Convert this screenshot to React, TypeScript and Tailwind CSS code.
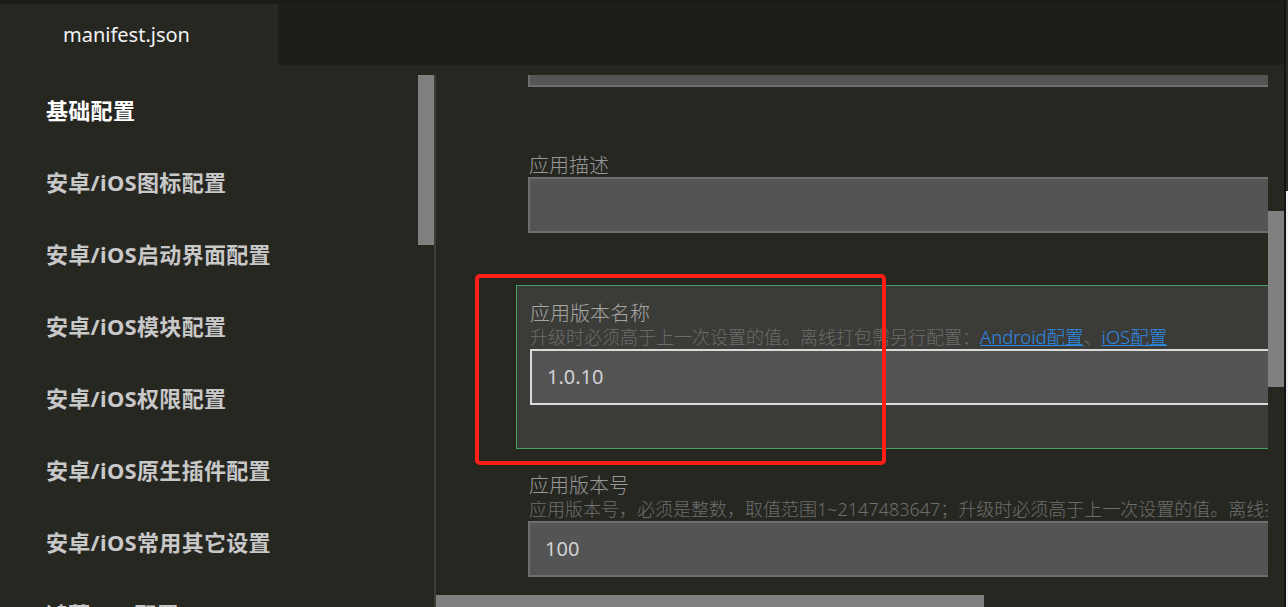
import React from "react";

const FONT = { fontFamily: '"Noto Sans", "Noto Sans CJK SC", sans-serif' };

const items = [
  "基础配置",
  "安卓/iOS图标配置",
  "安卓/iOS启动界面配置",
  "安卓/iOS模块配置",
  "安卓/iOS权限配置",
  "安卓/iOS原生插件配置",
  "安卓/iOS常用其它设置",
  "鸿蒙App配置",
];

export default function App() {
  return (
    <div className="flex h-[607px] w-[1288px] overflow-hidden bg-[#272722]" style={FONT}>
      <div className="flex w-[1284px] shrink-0 flex-col">
        {/* top strip */}
        <div className="h-[3px] shrink-0 bg-[#1a1b18]" />
        {/* tab bar */}
        <div className="flex h-[62px] shrink-0">
          <div className="flex w-[278px] shrink-0 items-center border-t border-[#1e1f1c] bg-[#272722] pl-[63px] text-[20px] text-[#f2f2f2]">
            manifest.json
          </div>
          <div className="flex-1 bg-[#1d1e1a]" />
        </div>
        {/* body */}
        <div className="flex min-h-0 flex-1">
          {/* sidebar */}
          <div className="w-[418px] shrink-0 pt-[9px]">
            {items.map((t, i) => (
              <div
                key={t}
                className={`flex h-[72px] items-center whitespace-nowrap pl-[46px] text-[22px] font-bold tracking-[0.3px] ${
                  i === 0 ? "text-white" : "text-[#c8c8c8]"
                }`}
              >
                {t}
              </div>
            ))}
          </div>
          {/* sidebar scrollbar */}
          <div className="w-[16px] shrink-0 pt-[10px]">
            <div className="h-[170px] bg-[#808080]" />
          </div>
          <div className="mt-[10px] w-[2px] shrink-0 bg-[#3c3c38]" />
          {/* main */}
          <div className="flex min-w-0 flex-1 flex-col pt-[10px]">
            <div className="flex h-[520px] shrink-0">
              <div className="relative min-w-0 flex-1 overflow-hidden">
                {/* top (cut) input */}
                <div className="ml-[92px] h-[12px] w-[800px] border-x-2 border-b-2 border-[#6e6e6e] bg-[#545454]" />

                {/* 应用描述 */}
                <div className="ml-[92px] mt-[67px]">
                  <div className="h-[23px] pl-px text-[20px] font-light leading-[23px] text-[#979797]">应用描述</div>
                  <div className="h-[56px] w-[800px] border-2 border-[#6e6e6e] bg-[#545454]" />
                </div>

                {/* 应用版本名称 (focused) */}
                <div className="ml-[80px] mt-[52px] w-[900px] border border-[#3fa35f] bg-[#3b3b37] pb-[43px] pl-[13px] pt-[16px]">
                  <div className="h-[23px] text-[20px] font-light leading-[23px] text-[#a6a6a6]">应用版本名称</div>
                  <div className="h-[24px] whitespace-nowrap text-[18px] font-light leading-[24px] text-[#6c6c6a]">
                    升级时必须高于上一次设置的值。离线打包需另行配置：
                    <span className="text-[18.5px] text-[#2b8ae6] underline">Android配置</span>
                    <span>、</span>
                    <span className="text-[18.5px] text-[#2b8ae6] underline">iOS配置</span>
                  </div>
                  <div className="flex h-[56px] w-[860px] items-center border-2 border-[#dadada] bg-[#545454] pl-[15px] text-[20px] text-[#d2d2d2]">
                    1.0.10
                  </div>
                </div>

                {/* 应用版本号 */}
                <div className="ml-[92px] mt-[25px]">
                  <div className="h-[23px] pl-px text-[20px] font-light leading-[23px] text-[#979797]">应用版本号</div>
                  <div className="h-[24px] whitespace-nowrap pl-px text-[18px] font-light leading-[24px] text-[#6e6e6c]">
                    应用版本号，必须是整数，取值范围1~2147483647；升级时必须高于上一次设置的值。离线打包需另行配置
                  </div>
                  <div className="flex h-[56px] w-[800px] items-center border-2 border-[#6e6e6e] bg-[#545454] pl-[15px] text-[20px] text-[#d2d2d2]">
                    100
                  </div>
                </div>

                {/* red annotation box */}
                <div className="absolute left-[39px] top-[199px] h-[191px] w-[411px] rounded-[5px] border-4 border-[#ff1f17]" />
              </div>
              {/* right scrollbar */}
              <div className="w-[16px] shrink-0">
                <div className="mt-[136px] h-[176px] bg-[#808080]" />
              </div>
            </div>
            {/* horizontal scrollbar */}
            <div className="h-[16px] shrink-0">
              <div className="h-[16px] w-[548px] bg-[#808080]" />
            </div>
          </div>
        </div>
      </div>
      {/* right edge strip */}
      <div className="w-[2px] shrink-0 bg-[#141512]" />
      <div className="flex w-[2px] shrink-0 flex-col">
        <div className="h-[191px] bg-[#2a2a26]" />
        <div className="flex-1 bg-[#f2f2f6]" />
      </div>
    </div>
  );
}
